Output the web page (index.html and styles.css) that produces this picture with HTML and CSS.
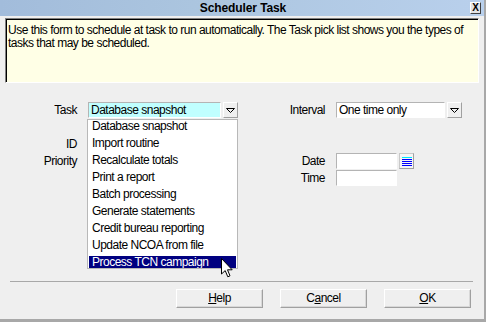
FILE: index.html
```html
<!DOCTYPE html>
<html lang="en">
<head>
    <meta charset="UTF-8">
    <title>Scheduler Task</title>
    <link rel="stylesheet" href="styles.css">
</head>
<body>
    <div class="dialog">
        <div class="titlebar">
            <span class="title">Scheduler Task</span>
            <span class="close">X</span>
        </div>

        <div class="note">
            Use this form to schedule at task to run automatically. The Task pick list shows you the types of tasks that may be scheduled.
        </div>

        <div class="form">
            <span class="lbl lbl-task">Task</span>
            <div class="combo combo-task">
                <span class="field field-task current">Database snapshot</span>
                <span class="btn-drop">
                    <svg width="9" height="5" viewBox="0 0 9 5"><path d="M0.5 0.5 H8.5 L4.5 4.5 Z" fill="none" stroke="#000"/></svg>
                </span>
            </div>

            <span class="lbl lbl-interval">Interval</span>
            <div class="combo combo-interval">
                <span class="field field-interval">One time only</span>
                <span class="btn-drop">
                    <svg width="9" height="5" viewBox="0 0 9 5"><path d="M0.5 0.5 H8.5 L4.5 4.5 Z" fill="none" stroke="#000"/></svg>
                </span>
            </div>

            <span class="lbl lbl-id">ID</span>
            <span class="lbl lbl-priority">Priority</span>

            <span class="lbl lbl-date">Date</span>
            <div class="combo combo-date">
                <span class="field field-short"></span>
                <span class="btn-cal">
                    <svg width="10" height="9" viewBox="0 0 10 9">
                        <rect x="0" y="0" width="10" height="1" fill="#00e8ff"/>
                        <rect x="0" y="2" width="10" height="1" fill="#0000ff"/>
                        <rect x="0" y="4" width="10" height="1" fill="#0000ff"/>
                        <rect x="0" y="6" width="10" height="1" fill="#0000ff"/>
                        <rect x="0" y="8" width="10" height="1" fill="#0000ff"/>
                    </svg>
                </span>
            </div>

            <span class="lbl lbl-time">Time</span>
            <div class="combo combo-time">
                <span class="field field-short"></span>
            </div>

            <ul class="picklist">
                <li>Database snapshot</li>
                <li>Import routine</li>
                <li>Recalculate totals</li>
                <li>Print a report</li>
                <li>Batch processing</li>
                <li>Generate statements</li>
                <li>Credit bureau reporting</li>
                <li>Update NCOA from file</li>
                <li class="selected">Process TCN campaign</li>
            </ul>

            <svg class="cursor" width="12" height="20" viewBox="0 0 12 20">
                <path d="M0.5 0.5 V16 L4.2 12.6 L6.8 18.8 L9 17.8 L6.5 11.8 H11.2 Z" fill="#fff" stroke="#000" stroke-width="1"/>
            </svg>
        </div>

        <div class="footer">
            <div class="buttons">
                <span class="btn"><u>H</u>elp</span>
                <span class="btn">C<u>a</u>ncel</span>
                <span class="btn"><u>O</u>K</span>
            </div>
        </div>
    </div>
</body>
</html>
```

FILE: styles.css
```css
body {
    margin: 0;
    padding: 0;
    background-color: #efefef;
    font-family: 'Liberation Sans', Arial, sans-serif;
    font-size: 12px;
    color: #000;
    overflow: hidden;
}

.dialog {
    width: 484px;
    height: 319px;
    border-right: 2px solid #a8a8a8;
    border-bottom: 3px solid #a8a8a8;
    background-color: #efefef;
    display: flex;
    flex-direction: column;
}

.titlebar {
    height: 16px;
    display: grid;
    grid-template-columns: 1fr auto 1fr;
    align-items: center;
    background: linear-gradient(to right, #a2bcdb, #abc5df 40%, #b9d0ec);
}

.title {
    grid-column: 2;
    font-weight: bold;
    font-size: 12px;
    letter-spacing: -0.1px;
    padding-left: 2px;
}

.close {
    grid-column: 3;
    justify-self: end;
    margin-right: 3px;
    width: 9px;
    height: 10px;
    line-height: 10px;
    text-align: center;
    font-size: 10px;
    font-weight: bold;
    background-color: #e4e4e4;
    border: 1px solid;
    border-color: #fff #404040 #404040 #fff;
}

.note {
    margin: 2px 5px 0 5px;
    height: 58px;
    padding: 5px 2px 0 2px;
    background-color: #ffffe6;
    border: 1px solid;
    border-color: #808080 #fff #fff #808080;
    box-shadow: inset 1px 1px 0 #000;
    line-height: 13px;
    letter-spacing: -0.5px;
}

.form {
    position: relative;
    margin-top: 19px;
    display: grid;
    grid-template-columns: 77px 150px 76px 1fr;
    grid-template-rows: repeat(5, 17px);
    column-gap: 11px;
}

.lbl {
    text-align: right;
    line-height: 16px;
    letter-spacing: -0.5px;
}

.lbl-task { grid-row: 1; grid-column: 1; }
.lbl-id { grid-row: 3; grid-column: 1; }
.lbl-priority { grid-row: 4; grid-column: 1; }
.lbl-interval { grid-row: 1; grid-column: 3; }
.lbl-date { grid-row: 4; grid-column: 3; }
.lbl-time { grid-row: 5; grid-column: 3; }

.combo {
    display: flex;
    gap: 2px;
    height: 16px;
}

.combo-task { grid-row: 1; grid-column: 2; }
.combo-interval { grid-row: 1; grid-column: 4; }
.combo-date { grid-row: 4; grid-column: 4; }
.combo-time { grid-row: 5; grid-column: 4; }

.field {
    box-sizing: border-box;
    height: 16px;
    padding-left: 2px;
    line-height: 14px;
    letter-spacing: -0.5px;
    background-color: #fff;
    border: 1px solid;
    border-color: #b4b4b4 #fff #fff #b4b4b4;
}

.field-task {
    width: 133px;
}

.current {
    background-color: #c0ffff;
}

.field-interval {
    width: 109px;
}

.field-short {
    width: 61px;
}

.btn-drop,
.btn-cal {
    box-sizing: border-box;
    width: 15px;
    height: 16px;
    display: flex;
    align-items: center;
    justify-content: center;
    background-color: #efefef;
    border: 1px solid;
    border-color: #fff #a0a0a0 #a0a0a0 #fff;
}

.btn-cal {
    background-color: #f6f6f6;
    border-color: #c8c8c8 #a0a0a0 #a0a0a0 #c8c8c8;
}

.picklist {
    position: absolute;
    top: 17px;
    left: 87px;
    box-sizing: border-box;
    width: 151px;
    height: 150px;
    margin: 0;
    padding: 0 1px;
    list-style: none;
    overflow: hidden;
    background-color: #fff;
    border: 1px solid #b8b8b8;
}

.picklist li {
    height: 17px;
    padding-left: 3px;
    line-height: 12px;
    letter-spacing: -0.5px;
}

.picklist li.selected {
    background-color: #000080;
    color: #fff;
}

.cursor {
    position: absolute;
    top: 156px;
    left: 221px;
}

.footer {
    margin-top: auto;
    padding: 0 11px 11px 10px;
}

.buttons {
    border-top: 1px solid #a8a8a8;
    padding-top: 7px;
    padding-right: 2px;
    display: flex;
    justify-content: flex-end;
    gap: 17px;
}

.btn {
    box-sizing: border-box;
    width: 87px;
    height: 19px;
    line-height: 17px;
    text-align: center;
    letter-spacing: -0.5px;
    background-color: #efefef;
    border: 1px solid;
    border-color: #fff #a0a0a0 #a0a0a0 #fff;
    box-shadow: inset -1px -1px 0 #d8d8d8;
}
```
